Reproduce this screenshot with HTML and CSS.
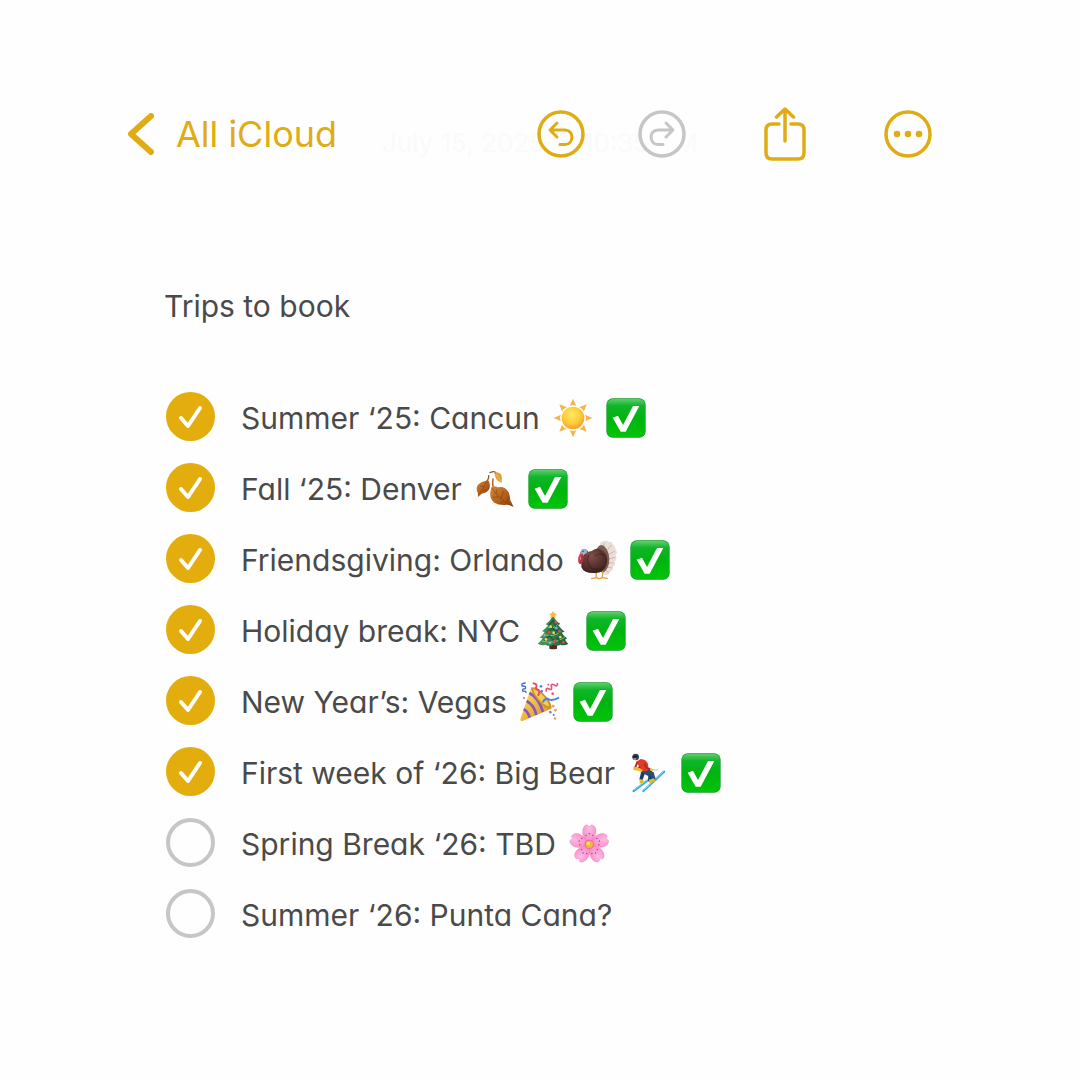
FILE: index.html
```html
<!DOCTYPE html>
<html lang="en">
<head>
    <meta charset="UTF-8">
    <meta name="viewport" content="width=device-width,initial-scale=1">
    <title>Trips to book</title>
    <link rel="stylesheet" href="styles.css">
</head>
<body>

<!-- shared emoji drawings -->
<svg class="sprites" aria-hidden="true">
    <defs>
        <linearGradient id="g-green" x1="0" y1="0" x2="0" y2="1">
            <stop offset="0" stop-color="#5fce6c"/>
            <stop offset=".18" stop-color="#10b52a"/>
            <stop offset=".5" stop-color="#00b40f"/>
            <stop offset="1" stop-color="#02c40a"/>
        </linearGradient>
        <radialGradient id="g-sun" cx=".45" cy=".35" r=".65">
            <stop offset="0" stop-color="#ffea62"/>
            <stop offset=".6" stop-color="#fdcb3a"/>
            <stop offset="1" stop-color="#f2a02c"/>
        </radialGradient>
        <linearGradient id="g-leaf" x1="0" y1="0" x2="1" y2="1">
            <stop offset="0" stop-color="#d28a3c"/>
            <stop offset=".5" stop-color="#b4611d"/>
            <stop offset="1" stop-color="#8f4310"/>
        </linearGradient>
        <radialGradient id="g-turkey" cx=".4" cy=".3" r=".75">
            <stop offset="0" stop-color="#7d5148"/>
            <stop offset=".6" stop-color="#57312c"/>
            <stop offset="1" stop-color="#351d1b"/>
        </radialGradient>
        <linearGradient id="g-tree" x1="0" y1="0" x2="1" y2="0">
            <stop offset="0" stop-color="#4c9a5c"/>
            <stop offset="1" stop-color="#1c5c38"/>
        </linearGradient>
        <linearGradient id="g-cone" x1="0" y1="0" x2="1" y2="1">
            <stop offset=".2" stop-color="#f8d65a"/>
            <stop offset=".8" stop-color="#dc9d2b"/>
        </linearGradient>
        <radialGradient id="g-petal" cx=".5" cy=".2" r=".9">
            <stop offset="0" stop-color="#fdbbe2"/>
            <stop offset=".6" stop-color="#f993cd"/>
            <stop offset="1" stop-color="#e45a9f"/>
        </radialGradient>
    </defs>
    <symbol id="e-check" viewBox="0 0 120 120">
        <rect x="1" y="1" width="118" height="118" rx="19" fill="#159c27"/>
        <rect x="3" y="3" width="114" height="114" rx="17" fill="url(#g-green)"/>
        <path d="M20 59L36 53L51 81L81 24H100L59 101H44Z" fill="#fff"/>
    </symbol>
    <symbol id="e-sun" viewBox="0 0 120 120">
        <g fill="#f4b548">
            <path id="ray" d="M60 2L70 24Q60 18 50 24Z"/>
            <use href="#ray" transform="rotate(45 60 60)"/>
            <use href="#ray" transform="rotate(90 60 60)"/>
            <use href="#ray" transform="rotate(135 60 60)"/>
            <use href="#ray" transform="rotate(180 60 60)"/>
            <use href="#ray" transform="rotate(225 60 60)"/>
            <use href="#ray" transform="rotate(270 60 60)"/>
            <use href="#ray" transform="rotate(315 60 60)"/>
        </g>
        <circle cx="60" cy="60" r="34" fill="url(#g-sun)"/>
    </symbol>
    <symbol id="e-leaf" viewBox="0 0 120 120">
        <path d="M45 11Q60 4 63 13M41 20Q42 28 38 33M54 30Q52 44 55 58" fill="none" stroke="#9a5424" stroke-width="4" stroke-linecap="round"/>
        <path d="M56 11Q72 6 79 17Q82 25 80 41Q64 36 61 24Q60 14 56 11Z" fill="#e0a03b"/>
        <path d="M38 31Q47 45 44 58Q38 73 20 74L9 84Q8 79 9 73Q1 61 8 49Q18 37 32 36Q36 33 38 31Z" fill="url(#g-leaf)"/>
        <path d="M49 54Q58 49 68 55Q89 50 101 70Q105 80 106 94L116 114Q103 107 96 107Q74 110 58 101Q44 89 46 70Z" fill="url(#g-leaf)"/>
        <path d="M36 37Q25 58 10 78M52 58Q70 89 111 111M63 75L66 61M77 89L86 66M70 83L53 85M86 97L74 105M94 101L101 84M26 53L15 51M21 63L35 64" fill="none" stroke="#743109" stroke-width="2" opacity=".7"/>
        <path d="M64 17Q70 25 78 38" fill="none" stroke="#f7cd6a" stroke-width="2"/>
    </symbol>
    <symbol id="e-turkey" viewBox="0 0 120 120">
        <path d="M69 13Q70 1 81 4Q90-2 95 6Q107 3 107 14Q118 17 115 28Q124 37 116 46Q122 58 113 64Q117 77 108 81Q108 94 99 95Q93 110 79 103L60 60Z" fill="#eadfd6"/>
        <path d="M76 30L83 8M86 36L104 14M90 47L113 33M90 58L114 52M88 69L110 69M83 79L105 84M79 87L95 97" stroke="#c9b7af" stroke-width="3" fill="none"/>
        <path d="M60 25Q73 5 87 25Q100 45 96 70Q92 91 77 99L50 80Z" fill="#7b5a52"/>
        <path d="M57 94L58 113M77 95L76 113M58 113L44 116M58 113L65 116M76 113L68 116M76 113L91 115" stroke="#d7a24b" stroke-width="4" fill="none" stroke-linecap="round"/>
        <path d="M13 60Q18 36 44 33Q63 19 79 34Q97 50 88 76Q78 100 54 99Q20 101 13 81Z" fill="url(#g-turkey)"/>
        <path d="M36 45Q25 59 39 81Q58 96 79 80M52 49Q69 35 82 48" fill="none" stroke="#2c1716" stroke-width="4" opacity=".4"/>
        <path d="M31 40Q26 30 19 32Q12 37 15 48Q18 58 10 68" fill="none" stroke="#a73545" stroke-width="9" stroke-linecap="round"/>
        <path d="M11 37Q14 25 23 26Q32 29 30 39L14 43Z" fill="#8eb5c7"/>
        <path d="M12 38L5 44L14 44Z" fill="#d7a24b"/>
        <path d="M12 44Q4 52 7 66" stroke="#d43a49" stroke-width="6" fill="none" stroke-linecap="round"/>
        <circle cx="18" cy="34" r="2" fill="#222"/>
    </symbol>
    <symbol id="e-tree" viewBox="0 0 120 120">
        <path d="M49 94H72V113Q60 117 49 113Z" fill="#512b24"/>
        <path d="M60 14Q69 31 82 38L76 43Q84 54 95 62L86 65Q93 76 102 82L96 86Q101 94 106 99Q92 105 82 101Q74 107 61 101Q48 108 38 101Q26 105 14 98Q24 91 29 82L20 80Q30 72 35 63L27 61Q39 53 45 43L38 40Q51 31 60 14Z" fill="url(#g-tree)"/>
        <path d="M42 47Q60 57 74 40M32 70Q60 81 85 61M26 90Q62 101 95 79" fill="none" stroke="#91bd76" stroke-width="3"/>
        <path d="M48 42L60 29L69 47M42 65L58 50L68 68M68 56L82 67M33 88L50 74L63 90M70 80L83 92" fill="none" stroke="#164d31" stroke-width="4" opacity=".75"/>
        <path d="M60 0L64 7L72 9L66 14L68 22L60 18L52 22L54 14L48 9L56 7Z" fill="#f9b83c"/>
        <g fill="#e94859"><circle cx="68" cy="34" r="4"/><circle cx="79" cy="61" r="4"/><circle cx="48" cy="64" r="4"/><circle cx="64" cy="91" r="5"/><circle cx="91" cy="94" r="4"/></g>
        <g fill="#f8d454"><circle cx="53" cy="47" r="4"/><circle cx="62" cy="65" r="4"/><circle cx="39" cy="85" r="4"/><circle cx="82" cy="78" r="4"/></g>
        <g fill="#78b6f0"><circle cx="70" cy="51" r="4"/><circle cx="34" cy="74" r="3"/><circle cx="51" cy="96" r="4"/></g>
    </symbol>
    <symbol id="e-party" viewBox="0 0 120 120">
        <path d="M33 17Q58 22 78 43Q96 64 94 80L6 118Q-1 117 2 109Z" fill="url(#g-cone)"/>
        <path d="M28 33Q56 47 69 90M20 57Q43 70 49 99M11 82Q24 88 29 107" fill="none" stroke="#8b55bd" stroke-width="8"/>
        <path d="M33 17Q42 11 68 33Q95 59 94 80Q77 83 54 56Q34 32 33 17Z" fill="#ce922f"/>
        <path d="M40 21Q60 29 72 44Q85 59 88 73Q74 73 56 51Q41 34 40 21Z" fill="#f4cc53"/>
        <path d="M17 3Q3 3 6 12Q20 11 16 20Q4 20 9 28Q19 26 18 33" fill="none" stroke="#3b69dc" stroke-width="4"/>
        <path d="M38 4Q52 5 49 14Q45 21 54 23Q63 27 54 41" fill="none" stroke="#ef4962" stroke-width="6"/>
        <path d="M79 29Q76 16 86 20Q98 27 94 13Q92 5 101 8Q114 17 112 3" fill="none" stroke="#e85185" stroke-width="5"/>
        <path d="M68 61Q77 45 88 53Q98 57 117 47" fill="none" stroke="#4a83df" stroke-width="6"/>
        <g fill="#4b83e5"><circle cx="63" cy="13" r="4"/><circle cx="65" cy="28" r="4"/><circle cx="101" cy="99" r="3"/></g>
        <g fill="#ed5577"><circle cx="98" cy="35" r="4"/><circle cx="85" cy="8" r="3"/><circle cx="12" cy="48" r="3"/></g>
        <g fill="#e9a45d"><path d="M96 68l8 1-2 8-8-2zM104 80l8 2-4 7-7-3zM102 106l7 1-1 7-7-2z"/></g>
        <path d="M86 88l7-2 3 6-7 3z" fill="#a178d8"/>
    </symbol>
    <symbol id="e-skier" viewBox="0 0 120 120">
        <path d="M17 114L63 79M46 114L108 56" stroke="#36a9d9" stroke-width="7" stroke-linecap="round"/>
        <path d="M18 111L62 77M47 111L107 55" stroke="#8adcf4" stroke-width="3"/>
        <path d="M47 50L89 51M36 56L86 83" stroke="#93a0ad" stroke-width="2"/>
        <path d="M42 47L60 45L77 60L70 87L60 85L61 68L50 63L43 84L34 79Z" fill="#1e3d63"/>
        <path d="M49 49L77 58L83 78L74 83L66 65L42 60Z" fill="#294f7d"/>
        <path d="M24 26L38 18Q56 20 60 33L62 51Q50 59 35 50L33 40Z" fill="#de3d29"/>
        <path d="M28 28L22 42L30 47L36 40M49 31L55 44L68 49" fill="none" stroke="#b72b20" stroke-width="6"/>
        <path d="M15 43L27 41L44 51L42 57L29 53L17 51Z" fill="#efbd2e"/>
        <path d="M67 45L77 49L73 54L65 52Z" fill="#efbd2e"/>
        <path d="M35 78L46 80L48 89L35 92ZM62 80L78 76L82 84L65 92Z" fill="#d8bf2c"/>
        <circle cx="23" cy="12" r="10" fill="#344457"/>
        <path d="M15 16L25 15L24 20L18 21Z" fill="#c98e6d"/>
        <path d="M14 12L27 10" stroke="#131c26" stroke-width="5"/>
    </symbol>
    <symbol id="e-flower" viewBox="0 0 120 120">
        <g fill="url(#g-petal)" stroke="#e77db7" stroke-width="1">
            <path id="petal" d="M61 61Q37 37 41 17Q44 4 53 2Q57 2 61 9Q65 1 70 3Q80 7 81 18Q83 37 61 61Z"/>
            <use href="#petal" transform="rotate(72 61 61)"/>
            <use href="#petal" transform="rotate(144 61 61)"/>
            <use href="#petal" transform="rotate(216 61 61)"/>
            <use href="#petal" transform="rotate(288 61 61)"/>
        </g>
        <g fill="#b52b69">
            <g id="dots"><circle cx="61" cy="29" r="2"/><circle cx="51" cy="34" r="2"/><circle cx="71" cy="34" r="2"/></g>
            <use href="#dots" transform="rotate(72 61 61)"/>
            <use href="#dots" transform="rotate(144 61 61)"/>
            <use href="#dots" transform="rotate(216 61 61)"/>
            <use href="#dots" transform="rotate(288 61 61)"/>
        </g>
        <circle cx="61" cy="61" r="14" fill="#e66da4"/>
        <circle cx="61" cy="61" r="11" fill="#f0b934"/>
        <circle cx="58" cy="58" r="5" fill="#ffe477"/>
    </symbol>
</svg>

<header class="toolbar">
    <div class="note-date">July 15, 2025 at 10:35 AM</div>
    <a class="back" href="#">
        <svg width="26" height="42" viewBox="0 0 26 42"><path d="M23 3L3 21L23 39"/></svg>
        <span>All iCloud</span>
    </a>
    <div class="history">
        <button type="button" aria-label="Undo">
            <svg width="48" height="48" viewBox="0 0 48 48">
                <circle cx="24" cy="24" r="22"/>
                <path class="arrow" d="M20 13L13 20L20 27M13.500 20H28C37.500 20 37 34.500 28 34.500H23"/>
            </svg>
        </button>
        <button type="button" aria-label="Redo" disabled>
            <svg width="48" height="48" viewBox="0 0 48 48">
                <circle cx="24" cy="24" r="22"/>
                <path class="arrow" d="M28 13L35 20L28 27M34.500 20H20C10.500 20 11 34.500 20 34.500H25"/>
            </svg>
        </button>
    </div>
    <button type="button" aria-label="Share">
        <svg width="42" height="54" viewBox="0 0 42 54">
            <path d="M15 17H8Q2 17 2 23V46Q2 52 8 52H34Q40 52 40 46V23Q40 17 34 17H27M21 34V3M12.500 10L21 2L29.500 10"/>
        </svg>
    </button>
    <button type="button" aria-label="More">
        <svg width="48" height="48" viewBox="0 0 48 48">
            <circle cx="24" cy="24" r="22"/>
            <g class="dots"><circle cx="13" cy="24" r="3.300"/><circle cx="24" cy="24" r="3.300"/><circle cx="35" cy="24" r="3.300"/></g>
        </svg>
    </button>
</header>

<main class="note">
    <h1>Trips to book</h1>
    <ul class="checklist">
        <li>
            <input type="checkbox" id="t1" checked>
            <label for="t1">Summer ‘25: Cancun</label>
            <span class="emojis"><svg><use href="#e-sun"/></svg><svg><use href="#e-check"/></svg></span>
        </li>
        <li>
            <input type="checkbox" id="t2" checked>
            <label for="t2">Fall ‘25: Denver</label>
            <span class="emojis"><svg><use href="#e-leaf"/></svg><svg><use href="#e-check"/></svg></span>
        </li>
        <li>
            <input type="checkbox" id="t3" checked>
            <label for="t3">Friendsgiving: Orlando</label>
            <span class="emojis"><svg><use href="#e-turkey"/></svg><svg><use href="#e-check"/></svg></span>
        </li>
        <li>
            <input type="checkbox" id="t4" checked>
            <label for="t4">Holiday break: NYC</label>
            <span class="emojis"><svg><use href="#e-tree"/></svg><svg><use href="#e-check"/></svg></span>
        </li>
        <li>
            <input type="checkbox" id="t5" checked>
            <label for="t5">New Year’s: Vegas</label>
            <span class="emojis"><svg><use href="#e-party"/></svg><svg><use href="#e-check"/></svg></span>
        </li>
        <li>
            <input type="checkbox" id="t6" checked>
            <label for="t6">First week of ‘26: Big Bear</label>
            <span class="emojis"><svg><use href="#e-skier"/></svg><svg><use href="#e-check"/></svg></span>
        </li>
        <li>
            <input type="checkbox" id="t7">
            <label for="t7">Spring Break ‘26: TBD</label>
            <span class="emojis"><svg><use href="#e-flower"/></svg></span>
        </li>
        <li>
            <input type="checkbox" id="t8">
            <label for="t8">Summer ‘26: Punta Cana?</label>
        </li>
    </ul>
</main>

</body>
</html>
```

FILE: styles.css
```css
* {
    box-sizing: border-box;
}
body {
    margin: 0;
    background: #fefefe;
    color: #4a4a4a;
    font-family: Inter, "Liberation Sans", sans-serif;
    font-optical-sizing: none;
}
.sprites {
    position: absolute;
    width: 0;
    height: 0;
}

/* toolbar */
.toolbar {
    position: relative;
    display: flex;
    align-items: center;
    gap: 78px;
    padding: 107px 148px 0 128px;
    color: #e0ac13;
}
.toolbar svg {
    display: block;
    fill: none;
    stroke: currentColor;
    stroke-width: 4;
    stroke-linecap: round;
    stroke-linejoin: round;
}
.toolbar button {
    position: relative;
    padding: 0;
    border: 0;
    background: none;
    color: inherit;
}
.toolbar button:disabled {
    color: #c6c6c6;
}
.toolbar button svg {
    stroke-width: 3.5;
}
.toolbar button circle {
    fill: #fefefe;
}
.toolbar .arrow {
    stroke-width: 3;
}
.toolbar .dots circle {
    fill: currentColor;
    stroke: none;
}
.back {
    display: flex;
    align-items: center;
    gap: 22px;
    margin-right: auto;
    color: inherit;
    font-size: 36px;
    line-height: 44px;
    text-decoration: none;
    font-optical-sizing: auto;
}
.toolbar .back svg {
    stroke-width: 6;
}
.history {
    display: flex;
    gap: 53px;
}
/* date fades out under the buttons */
.note-date {
    position: absolute;
    left: 0;
    right: 0;
    bottom: 2px;
    color: #fafafa;
    font-size: 26px;
    line-height: 32px;
    text-align: center;
}

/* note */
.note {
    padding: 125px 40px 60px 164px;
    font-size: 30px;
    line-height: 40px;
    font-feature-settings: "cv11";
}
.note h1 {
    margin: 0 0 56px;
    font-size: inherit;
    font-weight: 400;
}
.checklist {
    margin: 0;
    padding: 0;
    list-style: none;
}
.checklist li {
    display: flex;
    align-items: center;
    height: 71px;
}
.checklist input {
    appearance: none;
    flex: none;
    width: 49px;
    height: 49px;
    margin: 0 26px 3px 2px;
    border: 4px solid #c6c6c6;
    border-radius: 50%;
}
.checklist input:checked {
    border: 0;
    background: #e3ae0d url("data:image/svg+xml,%3Csvg xmlns='http://www.w3.org/2000/svg' viewBox='0 0 49 49'%3E%3Cpath d='M15 26L22 34L34 16' fill='none' stroke='%23fff' stroke-width='4' stroke-linecap='round' stroke-linejoin='round'/%3E%3C/svg%3E") center / 100%;
}
.emojis {
    display: flex;
    gap: 13px;
    margin-left: 13px;
}
.emojis svg {
    width: 40px;
    height: 40px;
}
```
